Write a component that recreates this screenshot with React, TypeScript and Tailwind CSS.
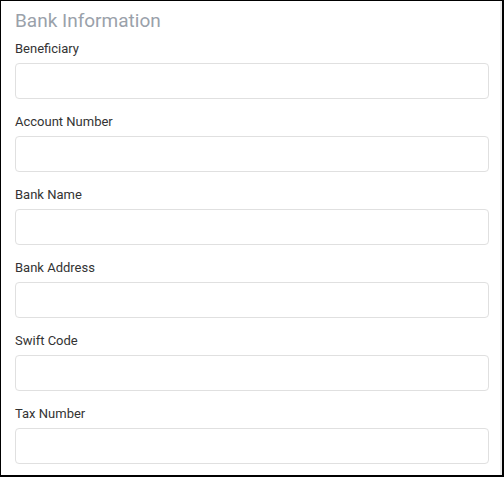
import React from 'react'

const fields = ['Beneficiary', 'Account Number', 'Bank Name', 'Bank Address', 'Swift Code', 'Tax Number']

export default function App() {
  return (
    <div className="w-[504px] h-[477px] bg-white border-black border-t border-l border-r-2 border-b-2 overflow-hidden font-['Roboto','Inter',sans-serif]">
      <div className="h-full border-r-2 border-[#ececec] pl-[14px] pr-[11px] pt-[8px]">
        <h2 className="text-[19px] leading-6 font-normal text-[#9aa1aa] mb-[8px]">Bank Information</h2>
        <div className="flex flex-col">
          {fields.map((label) => (
            <div key={label} className="mb-[15px]">
              <label className="block text-[13px] leading-4 text-[#333] mb-[6px]">{label}</label>
              <input
                type="text"
                className="block w-full h-9 rounded border border-[#e0e0e0] bg-white px-3 text-[13px] outline-none"
              />
            </div>
          ))}
        </div>
      </div>
    </div>
  )
}
